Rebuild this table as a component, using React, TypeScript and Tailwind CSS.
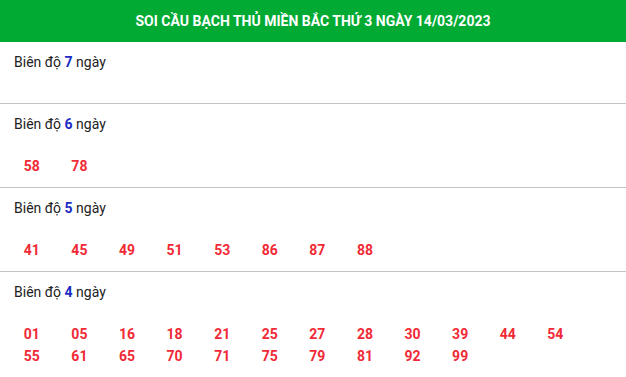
import React from 'react';

const SECTIONS: { days: number; numbers: string[] }[] = [
  { days: 7, numbers: [] },
  { days: 6, numbers: ['58', '78'] },
  { days: 5, numbers: ['41', '45', '49', '51', '53', '86', '87', '88'] },
  {
    days: 4,
    numbers: [
      '01', '05', '16', '18', '21', '25', '27', '28', '30', '39', '44', '54',
      '55', '61', '65', '70', '71', '75', '79', '81', '92', '99',
    ],
  },
];

const App: React.FC = () => {
  return (
    <div className="w-[626px] bg-white font-['Roboto',_'Liberation_Sans',_sans-serif] text-[14px] text-[#222]">
      {/* Header */}
      <div className="h-[42px] bg-[#00aa33] flex items-center justify-center">
        <h1 className="text-white font-bold text-[14px] whitespace-nowrap">
          SOI CẦU BẠCH THỦ MIỀN BẮC THỨ 3 NGÀY 14/03/2023
        </h1>
      </div>

      {SECTIONS.map(section => (
        <div key={section.days} className="border-b border-[#c4c4c4] py-[10px]">
          <p className="pl-[14px] leading-[20px]">
            Biên độ <span className="font-bold text-[#1a2bc4]">{section.days}</span> ngày
          </p>
          <div className="mt-[21px] pl-[8px] flex flex-wrap">
            {section.numbers.map(n => (
              <span
                key={n}
                className="w-[47.6px] text-center leading-[22px] font-bold text-[#f02a36]"
              >
                {n}
              </span>
            ))}
          </div>
        </div>
      ))}
    </div>
  );
};

export default App;
